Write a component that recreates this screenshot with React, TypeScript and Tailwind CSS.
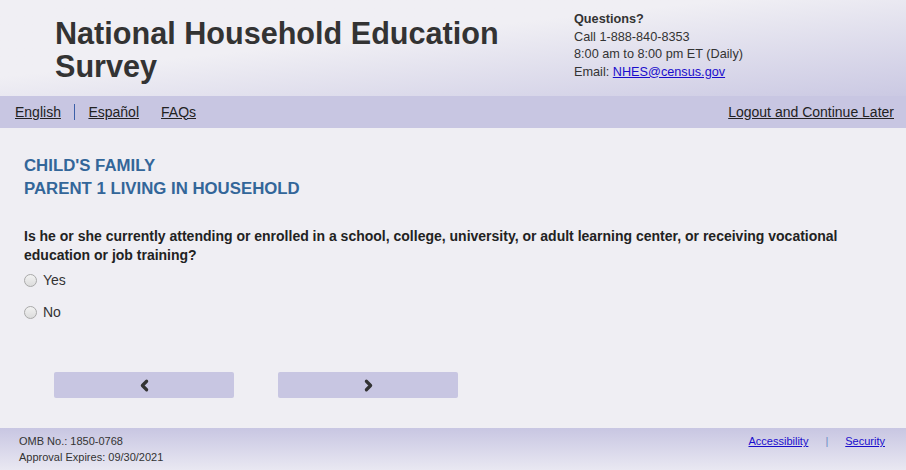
import { ChevronLeft, ChevronRight } from "lucide-react";

function Radio({ label }: { label: string }) {
  return (
    <label className="flex items-center gap-[6px] text-[14px] leading-[21px] text-[#333]">
      <span className="block h-[13px] w-[13px] rounded-full border border-[#a9a9a9] bg-gradient-to-b from-[#f2f2f2] to-[#dcdcdc]" />
      {label}
    </label>
  );
}

export default function App() {
  return (
    <div className="flex h-[470px] w-[906px] flex-col bg-[#efeef3] font-['Liberation_Sans',Arial,sans-serif] text-[#333]">
      <header className="flex h-[96px] bg-gradient-to-br from-[#f0eff4] from-40% to-[#cbc9e3]">
        <h1 className="ml-[55px] mt-[17px] w-[480px] text-[30.6px] font-bold leading-[33px] text-[#333]">
          National Household Education Survey
        </h1>
        <div className="ml-[39px] mt-[11px] text-[12.7px] leading-[17.5px] text-[#333]">
          <p className="font-bold">Questions?</p>
          <p>Call 1-888-840-8353</p>
          <p>8:00 am to 8:00 pm ET (Daily)</p>
          <p>
            Email: <a href="#" className="text-[#1a0dcc] underline">NHES@census.gov</a>
          </p>
        </div>
      </header>

      <nav className="flex h-[32px] items-center bg-[#c8c6e2] px-[15px] text-[14px] text-[#222]">
        <a href="#" className="underline">English</a>
        <span className="ml-[13px] mr-[13px] h-[16px] w-[1.5px] bg-[#3b5fa8]" />
        <a href="#" className="underline">Español</a>
        <a href="#" className="ml-[22px] underline">FAQs</a>
        <a href="#" className="ml-auto mr-[-3px] underline">Logout and Continue Later</a>
      </nav>

      <main className="flex-1 px-[24px] pt-[26px]">
        <h2 className="text-[16.8px] font-bold uppercase leading-[23px] text-[#336699]">
          Child's Family
          <br />
          Parent 1 Living in Household
        </h2>
        <p className="mt-[27px] text-[14px] font-bold leading-[19px] text-[#222]">
          Is he or she currently attending or enrolled in a school, college, university, or adult learning center, or receiving vocational education or job training?
        </p>
        <div className="mt-[5px] flex flex-col gap-[11px]">
          <Radio label="Yes" />
          <Radio label="No" />
        </div>
        <div className="ml-[30px] mt-[49px] flex gap-[44px]">
          <button className="flex h-[26px] w-[180px] items-center justify-center rounded-[2px] bg-[#c8c6e2] text-[#333]">
            <ChevronLeft size={17} strokeWidth={4.5} />
          </button>
          <button className="flex h-[26px] w-[180px] items-center justify-center rounded-[2px] bg-[#c8c6e2] text-[#333]">
            <ChevronRight size={17} strokeWidth={4.5} />
          </button>
        </div>
      </main>

      <footer className="flex h-[42px] items-start justify-between bg-gradient-to-b from-[#c8c6e2] to-[#e9e8f2] px-[19px] pt-[5px] text-[11px] leading-[16px] text-[#333]">
        <div>
          <p>OMB No.: 1850-0768</p>
          <p>Approval Expires: 09/30/2021</p>
        </div>
        <div className="mr-[2px] flex items-center">
          <a href="#" className="text-[#1a0dcc] underline">Accessibility</a>
          <span className="mx-[17px] text-[#6a8cc4]">|</span>
          <a href="#" className="text-[#1a0dcc] underline">Security</a>
        </div>
      </footer>
    </div>
  );
}
